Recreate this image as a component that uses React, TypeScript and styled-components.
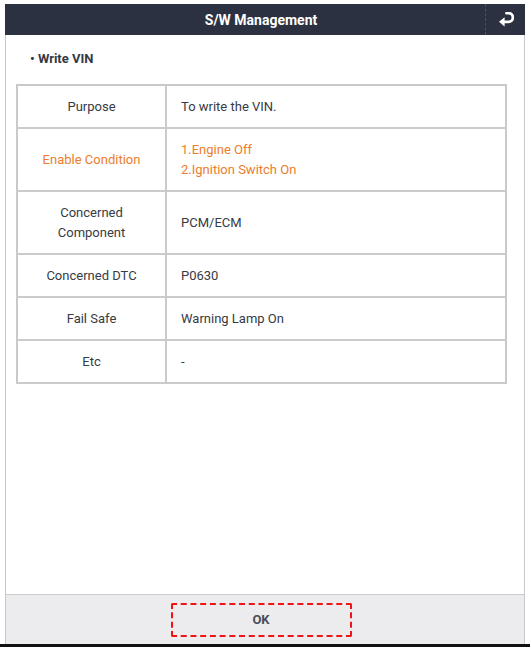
import styled, { createGlobalStyle } from "styled-components";

const GlobalStyle = createGlobalStyle`
  html, body {
    margin: 0;
    padding: 0;
    background: #fff;
  }
  body {
    font-family: Roboto, "Liberation Sans", Arial, sans-serif;
    color: #363b44;
  }
`;

type Row = {
  label: string[];
  value: string[];
  accent?: boolean;
  tall?: boolean;
};

const rows: Row[] = [
  { label: ["Purpose"], value: ["To write the VIN."] },
  {
    label: ["Enable Condition"],
    value: ["1.Engine Off", "2.Ignition Switch On"],
    accent: true,
    tall: true,
  },
  { label: ["Concerned", "Component"], value: ["PCM/ECM"], tall: true },
  { label: ["Concerned DTC"], value: ["P0630"] },
  { label: ["Fail Safe"], value: ["Warning Lamp On"] },
  { label: ["Etc"], value: ["-"] },
];

export default function App() {
  return (
    <>
      <GlobalStyle />
      <StyledPage>
        <StyledDialog>
          <StyledHeader>
            <span />
            <StyledTitle>S/W Management</StyledTitle>
            <StyledBackButton aria-label="Back">
              <svg width="16" height="15" viewBox="0 0 16 15">
                <path
                  d="M8.5 1.2 H10.6 A4.3 4.3 0 0 1 10.6 9.8 H5.6"
                  fill="none"
                  stroke="#fff"
                  strokeWidth="2.8"
                  strokeLinecap="round"
                />
                <path d="M1 9.8 L6.6 5.2 L6.6 14.4 Z" fill="#fff" />
              </svg>
            </StyledBackButton>
          </StyledHeader>

          <StyledBody>
            <StyledSection>• Write VIN</StyledSection>
            <StyledTable>
              <tbody>
                {rows.map((row) => (
                  <StyledRow key={row.label.join(" ")} $tall={row.tall}>
                    <StyledLabel $accent={row.accent}>
                      {row.label.map((l) => (
                        <div key={l}>{l}</div>
                      ))}
                    </StyledLabel>
                    <StyledValue $accent={row.accent}>
                      {row.value.map((v) => (
                        <div key={v}>{v}</div>
                      ))}
                    </StyledValue>
                  </StyledRow>
                ))}
              </tbody>
            </StyledTable>
          </StyledBody>

          <StyledFooter>
            <StyledOkButton>OK</StyledOkButton>
          </StyledFooter>
        </StyledDialog>
        <StyledBottomBar />
      </StyledPage>
    </>
  );
}

const StyledPage = styled.div`
  width: 530px;
  height: 647px;
  box-sizing: border-box;
  padding: 4px 5px 0 5px;
  display: flex;
  flex-direction: column;
`;

const StyledDialog = styled.div`
  flex: 1;
  display: flex;
  flex-direction: column;
  border-left: 1px solid #c6c8cc;
  border-right: 1px solid #c6c8cc;
  background: #fff;
`;

const StyledHeader = styled.header`
  height: 31px;
  margin: 0 -1px;
  background: #2b3140;
  display: grid;
  grid-template-columns: 32px 1fr 40px;
  align-items: stretch;
`;

const StyledTitle = styled.div`
  display: flex;
  align-items: center;
  justify-content: center;
  color: #fff;
  font-size: 14px;
  font-weight: 700;
`;

const StyledBackButton = styled.div`
  display: flex;
  align-items: center;
  justify-content: center;
  border-left: 1px dashed #4a5160;
  padding-bottom: 1px;
`;

const StyledBody = styled.main`
  flex: 1;
  padding: 14px 17px 0 10px;
`;

const StyledSection = styled.div`
  font-size: 13px;
  font-weight: 700;
  line-height: 20px;
  color: #333a44;
  padding-left: 14px;
  margin-bottom: 15px;
`;

const StyledTable = styled.table`
  width: 100%;
  border-collapse: collapse;
  border: 2px solid #c9c9c9;
  font-size: 13px;
  line-height: 20px;
`;

const StyledRow = styled.tr<{ $tall?: boolean }>`
  height: ${(p) => (p.$tall ? "63px" : "43px")};
`;

const StyledLabel = styled.td<{ $accent?: boolean }>`
  width: 147px;
  padding: 0;
  text-align: center;
  border-right: 2px solid #cbcbcb;
  border-bottom: 2px solid #cbcbcb;
  color: ${(p) => (p.$accent ? "#ec7d2c" : "#363b44")};
`;

const StyledValue = styled.td<{ $accent?: boolean }>`
  padding: 0 0 0 14px;
  border-bottom: 2px solid #cbcbcb;
  color: ${(p) => (p.$accent ? "#ec7d2c" : "#363b44")};
`;

const StyledFooter = styled.footer`
  height: 49px;
  border-top: 1px solid #c8cacd;
  background: #ececee;
  display: flex;
  align-items: center;
  justify-content: center;
  padding-right: 8px;
`;

const StyledOkButton = styled.div`
  width: 181px;
  height: 34px;
  box-sizing: border-box;
  border: 2px dashed #f01414;
  border-radius: 2px;
  display: flex;
  align-items: center;
  justify-content: center;
  font-size: 13px;
  font-weight: 700;
  color: #4a4e56;
`;

const StyledBottomBar = styled.div`
  height: 3px;
  margin: 0 -5px;
  background: #111;
`;
